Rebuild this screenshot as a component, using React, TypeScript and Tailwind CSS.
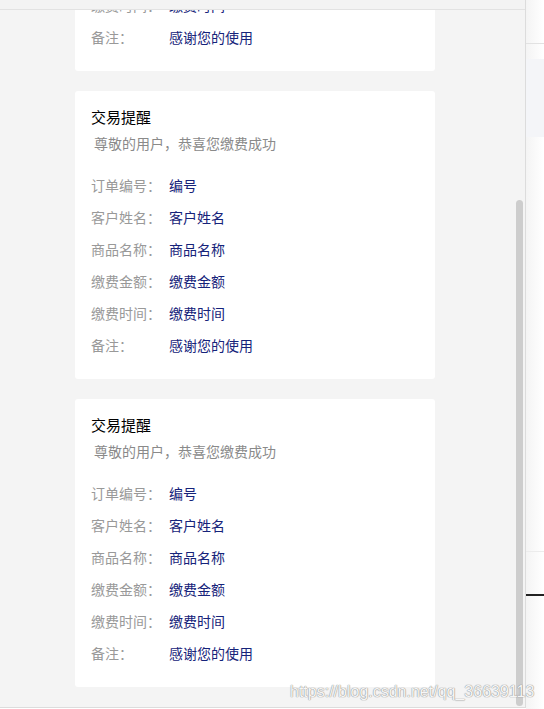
const rows = [
  { label: "订单编号：", value: "编号" },
  { label: "客户姓名：", value: "客户姓名" },
  { label: "商品名称：", value: "商品名称" },
  { label: "缴费金额：", value: "缴费金额" },
  { label: "缴费时间：", value: "缴费时间" },
  { label: "备注：", value: "感谢您的使用" },
];

function NoticeCard({ className = "" }: { className?: string }) {
  return (
    <div className={`ml-[75px] w-[360px] shrink-0 rounded-[3px] bg-white px-4 pt-[16px] pb-[18px] ${className}`}>
      {/* Title */}
      <div className="text-[15px] leading-[20px] text-black">交易提醒</div>
      <div className="mt-[6px] pl-[3px] text-[14px] leading-[20px] text-[#8a8a8a]">
        尊敬的用户，恭喜您缴费成功
      </div>

      {/* Detail rows */}
      <div className="mt-4">
        {rows.map((r) => (
          <div key={r.label} className="flex h-[32px] items-center text-[14px]">
            <span className="w-[78px] text-[#999999]">{r.label}</span>
            <span className="text-[#16237a]">{r.value}</span>
          </div>
        ))}
      </div>
    </div>
  );
}

export default function App() {
  return (
    <div
      className="relative flex h-[709px] w-[544px] overflow-hidden bg-white"
      style={{ fontFamily: '"Noto Sans CJK SC", "Noto Sans", sans-serif' }}
    >
      {/* Phone panel */}
      <div className="flex h-[708px] w-[526px] shrink-0 flex-col border-r border-b border-[#dcdcdc] bg-[#f4f4f4]">
        {/* Top bar */}
        <div className="h-[10px] shrink-0 border-b border-[#e2e2e2] bg-[#f3f3f3]" />

        {/* Scroll area */}
        <div className="relative flex flex-1 flex-col gap-5 overflow-hidden">
          <NoticeCard className="mt-[-227px]" />
          <NoticeCard />
          <NoticeCard />

          {/* Scrollbar */}
          <div className="absolute top-[190px] left-[516px] h-[506px] w-[7px] rounded-full bg-[#cdcdcd]" />
        </div>
      </div>

      {/* Right edge of neighbouring window */}
      <div className="flex flex-1 flex-col bg-gradient-to-r from-[#f4f4f4] to-white">
        <div className="h-[44px] border-b border-[#e2e2e2]" />
        <div className="mt-[15px] h-[78px] bg-[#f4f5f8]" />
        <div className="h-[415px] border-b border-[#ececec]" />
        <div className="mt-[42px] h-[2px] bg-[#222222]" />
      </div>

      {/* Watermark */}
      <div
        className="absolute top-[681px] left-[290px] text-[16px] leading-[22px] text-[#f6f6f6] [text-shadow:0_0_1px_#8a8a8a,0_0_1px_#8a8a8a]"
        style={{ fontFamily: '"Liberation Sans", Arial, sans-serif' }}
      >
        https://blog.csdn.net/qq_36639113
      </div>
    </div>
  );
}
